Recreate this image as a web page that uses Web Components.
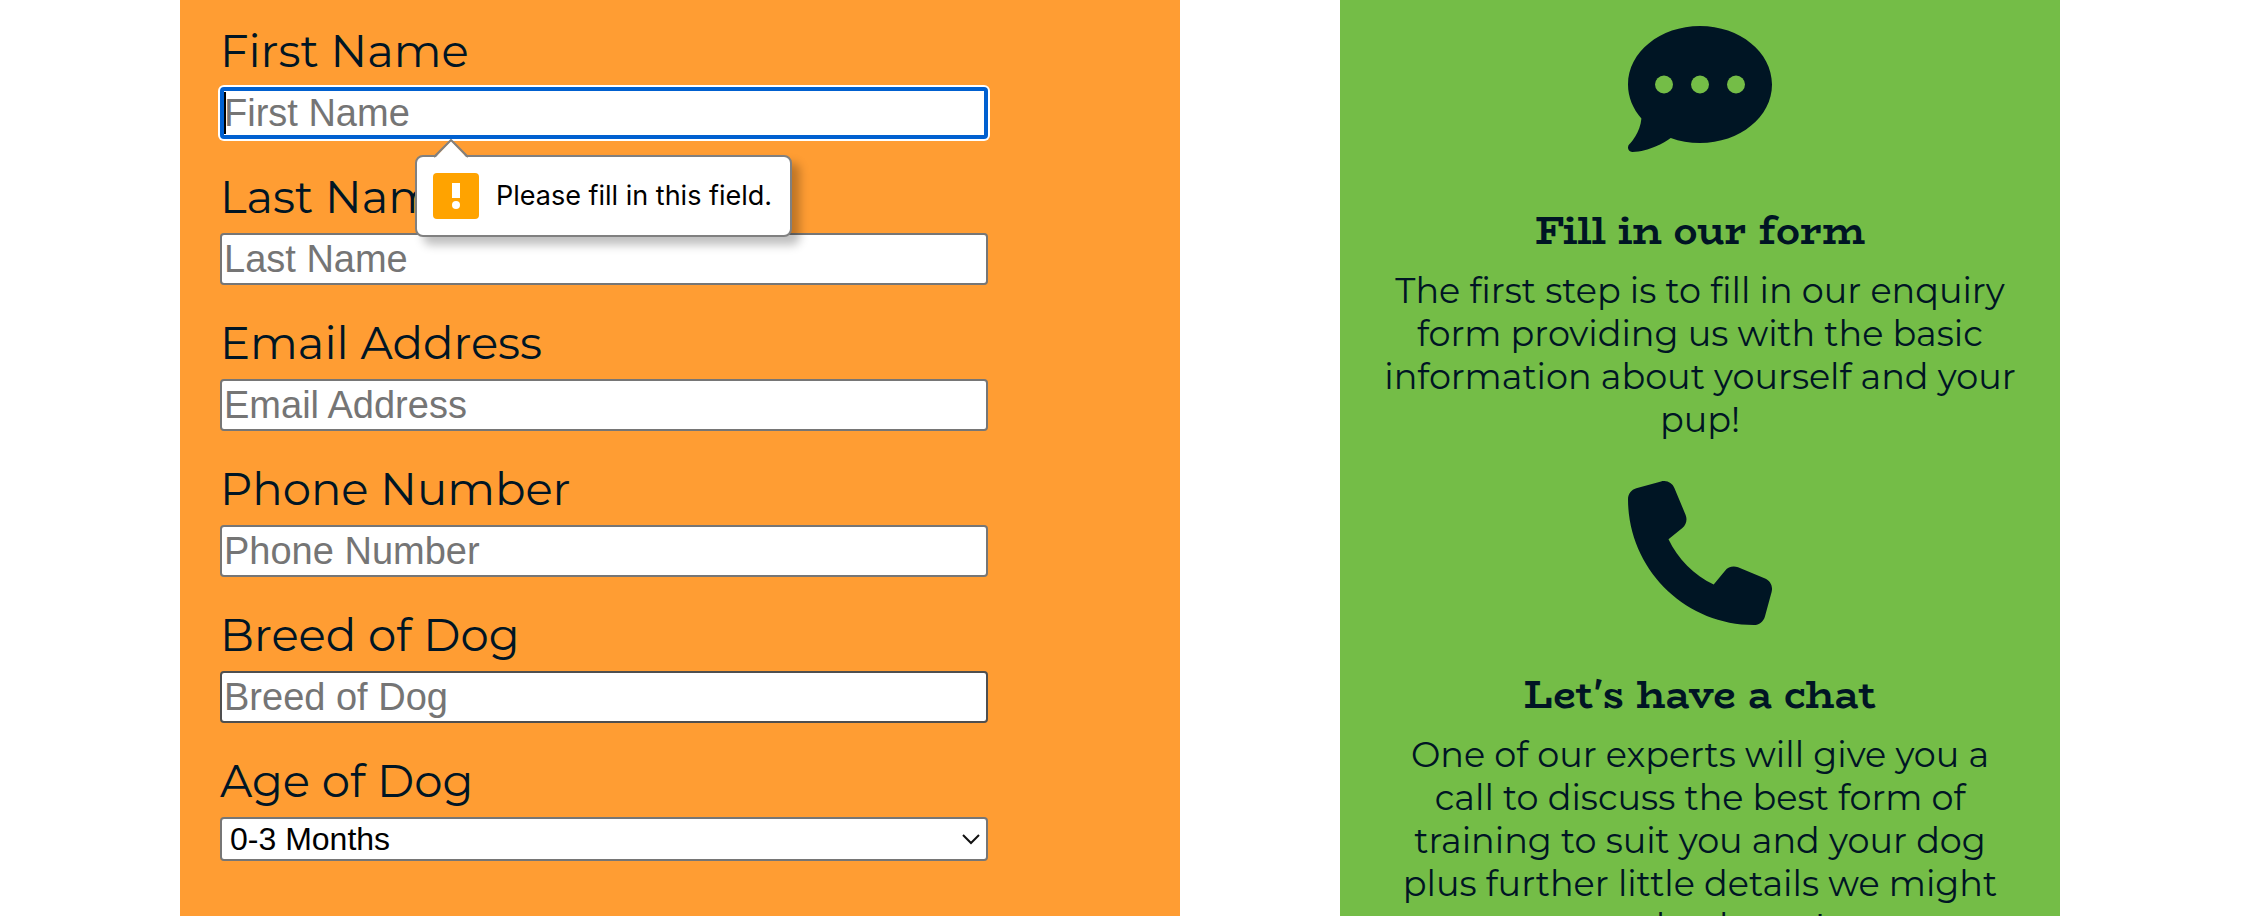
<!DOCTYPE html>
<html lang="en">
<head>
<meta charset="utf-8">
<title>Dog training enquiry</title>
<style>
  :root {
    --navy: #001524;
    --orange: #ff9d33;
    --green: #74bd47;
    --grey: #767676;
    --focus: #0060d0;
    --body-font: Montserrat, Inter, sans-serif;
    --control-font: Arial, "Liberation Sans", sans-serif;
    --heading-font: BioRhyme, "DejaVu Serif", serif;
  }
  body {
    margin: 0;
    height: 100vh;
    overflow: hidden;
    background: #fff;
    color: var(--navy);
    font-family: var(--body-font);
  }
</style>
</head>
<body>
<enquiry-page>
  <enquiry-form slot="form">
    <text-field label="First Name" active>
      <validation-bubble slot="message">Please fill in this field.</validation-bubble>
    </text-field>
    <text-field label="Last Name"></text-field>
    <text-field label="Email Address" type="email"></text-field>
    <text-field label="Phone Number" type="tel"></text-field>
    <text-field label="Breed of Dog" hovered></text-field>
    <select-field label="Age of Dog" options="0-3 Months|3-6 Months|6-12 Months|1 Year +"></select-field>
  </enquiry-form>
  <steps-panel slot="steps">
    <step-card>
      <svg slot="icon" viewBox="0 0 512 512" aria-hidden="true"><path fill="#001524" d="M256 448c141.400 0 256-93.100 256-208S397.400 32 256 32S0 125.100 0 240c0 45.100 17.700 86.800 47.700 120.900c-1.900 24.500-11.400 46.300-21.400 62.900c-5.500 9.200-11.100 16.600-15.200 21.600c-2.100 2.500-3.700 4.400-4.900 5.700c-.6 .6-1 1.100-1.300 1.400l-.3 .3c-4.600 4.600-5.900 11.400-3.400 17.400c2.500 6 8.300 9.900 14.800 9.900c28.700 0 57.600-8.900 81.600-19.300c22.900-10 42.400-21.900 54.300-30.600c31.800 11.500 67 17.900 104.100 17.900z"/><g fill="#74bd47"><circle cx="128" cy="240" r="32"/><circle cx="256" cy="240" r="32"/><circle cx="384" cy="240" r="32"/></g></svg>
      <span slot="title">Fill in our form</span>
      The first step is to fill in our enquiry form providing us with the basic information about yourself and your pup!
    </step-card>
    <step-card>
      <svg slot="icon" viewBox="0 0 512 512" aria-hidden="true"><path fill="#001524" d="M164.900 24.600c-7.700-18.600-28-28.500-47.400-23.200l-88 24C12.100 30.200 0 46 0 64C0 311.400 200.600 512 448 512c18 0 33.800-12.100 38.600-29.500l24-88c5.300-19.400-4.600-39.700-23.200-47.400l-96-40c-16.300-6.800-35.200-2.100-46.300 11.600L304.700 368C234.300 334.700 177.300 277.700 144 207.300L193.300 167c13.700-11.200 18.400-30 11.600-46.300l-40-96z"/></svg>
      <span slot="title">Let's have a chat</span>
      One of our experts will give you a call to discuss the best form of training to suit you and your dog plus further little details we might need to know!
    </step-card>
  </steps-panel>
</enquiry-page>

<script>
  const FIELD_CSS = `
    :host { display: flex; flex-direction: column; gap: 8px; position: relative; }
    label { font-size: 45px; line-height: 56px; }
    input, select {
      box-sizing: border-box; width: 100%; margin: 0;
      border: 2px solid var(--grey); border-radius: 4px;
      background: #fff; font-family: var(--control-font); outline: none;
    }
  `;

  class BaseElement extends HTMLElement {
    constructor() {
      super();
      this.attachShadow({ mode: 'open' });
    }
    connectedCallback() {
      this.shadowRoot.innerHTML = this.render();
    }
  }

  customElements.define('enquiry-page', class extends BaseElement {
    render() {
      return `<style>
        :host { display: block; min-height: 100vh; }
        main {
          display: grid; grid-template-columns: 25fr 18fr; column-gap: 160px;
          min-height: 100vh; box-sizing: border-box; padding: 0 208px 0 180px;
        }
      </style><main><slot name="form"></slot><slot name="steps"></slot></main>`;
    }
  });

  customElements.define('enquiry-form', class extends BaseElement {
    render() {
      return `<style>
        :host { display: block; background: var(--orange); padding: 23px 0 0 40px; }
        form { display: flex; flex-direction: column; gap: 30px; width: 80%; }
      </style><form novalidate><slot></slot></form>`;
    }
  });

  customElements.define('text-field', class extends BaseElement {
    render() {
      const label = this.getAttribute('label');
      const type = this.getAttribute('type') || 'text';
      return `<style>${FIELD_CSS}
        input { height: 52px; padding: 2px; font-size: 38px; line-height: 44px; color: #000; }
        input::placeholder { color: #757575; opacity: 1; }
        :host([hovered]) input { border-color: #4f4f4f; }
        :host([active]) input {
          border: 4px solid var(--focus); padding: 0; box-shadow: 0 0 0 2px #fff;
          background: linear-gradient(#000, #000) left center / 2px 42px no-repeat #fff;
        }
      </style>
      <label for="control">${label}</label>
      <input id="control" type="${type}" placeholder="${label}">
      <slot name="message"></slot>`;
    }
  });

  customElements.define('select-field', class extends BaseElement {
    render() {
      const options = this.getAttribute('options').split('|').map(o => `<option>${o}</option>`).join('');
      return `<style>${FIELD_CSS}
        .box { display: grid; align-items: center; }
        .box > * { grid-area: 1 / 1; }
        select { appearance: none; height: 44px; padding: 0 40px 0 8px; font-size: 32px; color: #000; }
        svg { justify-self: end; width: 18px; height: 12px; margin-right: 8px; pointer-events: none; }
      </style>
      <label for="control">${this.getAttribute('label')}</label>
      <div class="box">
        <select id="control">${options}</select>
        <svg viewBox="0 0 18 12" aria-hidden="true"><path d="M1 2l8 8 8-8" fill="none" stroke="#111" stroke-width="2"/></svg>
      </div>`;
    }
  });

  customElements.define('validation-bubble', class extends BaseElement {
    render() {
      return `<style>
        :host {
          position: absolute; z-index: 1; left: 195px; top: calc(100% + 16px);
          display: flex; align-items: center; gap: 17px;
          padding: 16px 18px 16px 16px; border: 2px solid #808080; border-radius: 8px;
          background: #fff; color: #000; white-space: nowrap;
          font: 27px/34px Inter, sans-serif;
          box-shadow: 8px 8px 10px rgba(0, 0, 0, .25);
        }
        .tip { position: absolute; left: 16px; top: -18px; width: 36px; height: 19px; }
        .warn { width: 46px; height: 46px; }
      </style>
      <svg class="tip" viewBox="0 0 36 19" aria-hidden="true"><path d="M2 19L18 2l16 17z" fill="#fff"/><path d="M1 18L18 1l17 17" fill="none" stroke="#808080" stroke-width="2"/></svg>
      <svg class="warn" viewBox="0 0 46 46" aria-hidden="true"><rect width="46" height="46" rx="4" fill="#ffa300"/><path d="M19 10h8v15h-8z" fill="#fff"/><circle cx="23" cy="32" r="4" fill="#fff"/></svg>
      <span role="alert"><slot></slot></span>`;
    }
  });

  customElements.define('steps-panel', class extends BaseElement {
    render() {
      return `<style>
        :host {
          display: flex; flex-direction: column; gap: 40px;
          background: var(--green); padding: 17px 40px;
        }
      </style><slot></slot>`;
    }
  });

  customElements.define('step-card', class extends BaseElement {
    render() {
      return `<style>
        :host { display: flex; flex-direction: column; align-items: center; text-align: center; }
        ::slotted(svg) { width: 144px; height: 144px; }
        h3 { margin: 46px 0 16px; font: bold 40px/46px var(--heading-font); }
        p { margin: 0; font-size: 35px; line-height: 43px; }
      </style>
      <slot name="icon"></slot>
      <h3><slot name="title"></slot></h3>
      <p><slot></slot></p>`;
    }
  });
</script>
</body>
</html>
